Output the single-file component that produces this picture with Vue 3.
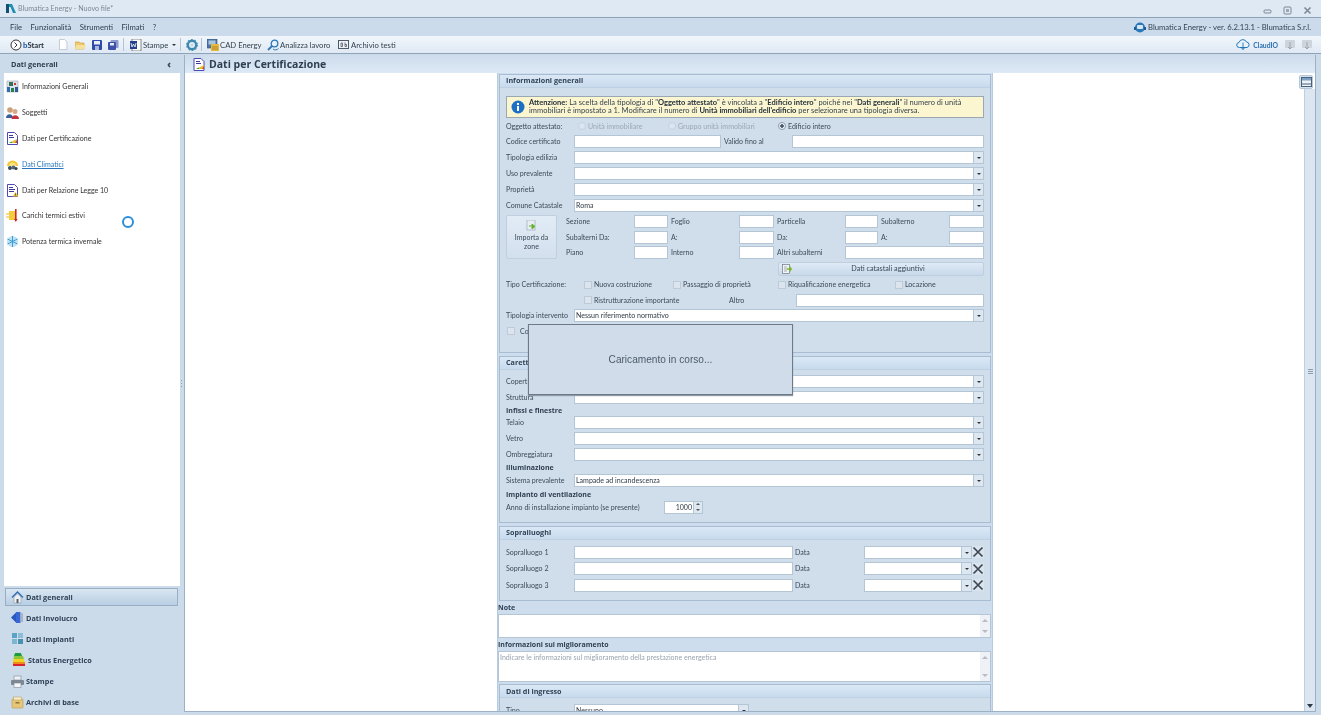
<script setup>
const tree = [
  { t: 'Informazioni Generali', i: 'info' },
  { t: 'Soggetti', i: 'people' },
  { t: 'Dati per Certificazione', i: 'cert' },
  { t: 'Dati Climatici', i: 'sun', link: true },
  { t: 'Dati per Relazione Legge 10', i: 'doc' },
  { t: 'Carichi termici estivi', i: 'heat' },
  { t: 'Potenza termica invernale', i: 'snow' }
]
const nav = [
  { t: 'Dati generali', i: 'house', on: true },
  { t: 'Dati Involucro', i: 'wrap' },
  { t: 'Dati Impianti', i: 'plant' },
  { t: 'Status Energetico', i: 'status', wide: true },
  { t: 'Stampe', i: 'print' },
  { t: 'Archivi di base', i: 'box' }
]
const catasto = [
  ['Sezione', 'Foglio', 'Particella', 'Subalterno'],
  ['Subalterni Da:', 'A:', 'Da:', 'A:']
]
const combos1 = [
  { l: 'Tipologia edilizia', v: '' },
  { l: 'Uso prevalente', v: '' },
  { l: 'Proprietà', v: '' },
  { l: 'Comune Catastale', v: 'Roma' }
]
const combos3 = ['Telaio', 'Vetro', 'Ombreggiatura']
const visits = ['Sopralluogo 1', 'Sopralluogo 2', 'Sopralluogo 3']
</script>

<template>
  <div class="app">
    <header class="titlebar">
      <svg class="logo" width="11" height="11" viewBox="0 0 11 11"><path d="M0 1h6l4 9H7L4.500 4H3v6H0z" fill="#1f8fb0"/><path d="M0 1h3v9H0z" fill="#12506e"/></svg>
      <span class="title-text">Blumatica Energy - Nuovo file*</span>
      <div class="win-btns">
        <svg width="9" height="9" viewBox="0 0 9 9"><rect x="1" y="4" width="7" height="3" rx="1" fill="none" stroke="#7b8896"/></svg>
        <svg width="9" height="9" viewBox="0 0 9 9"><rect x="1" y="1" width="7" height="7" rx="1" fill="none" stroke="#7b8896"/><rect x="3" y="3" width="3" height="3" fill="#9aa6b2"/></svg>
        <svg width="9" height="9" viewBox="0 0 9 9"><path d="M1.500 1.500l6 6M7.500 1.500l-6 6" stroke="#7b8896" stroke-width="1.600"/></svg>
      </div>
    </header>

    <div class="menubar">
      <span>File</span><span>Funzionalità</span><span>Strumenti</span><span>Filmati</span><span>?</span>
      <div class="version">
        <svg width="12" height="11" viewBox="0 0 12 11"><circle cx="6" cy="5.500" r="5" fill="#2b78b8"/><rect x="3" y="3" width="6" height="4" rx="1" fill="#d8e6f2"/><rect x="0" y="5" width="2" height="3" fill="#1b5c94"/><rect x="10" y="5" width="2" height="3" fill="#1b5c94"/></svg>
        <span>Blumatica Energy - ver. 6.2.13.1 - Blumatica S.r.l.</span>
      </div>
    </div>

    <div class="toolbar">
      <svg class="t-ic" width="12" height="12" viewBox="0 0 12 12"><circle cx="6" cy="6" r="5" fill="#fff" stroke="#333"/><path d="M4.500 3.500L7 6l-2.500 2.500" fill="none" stroke="#333"/></svg>
      <span class="bstart"><b class="blue">b</b>Start</span>
      <svg class="t-new" width="9" height="11" viewBox="0 0 9 11"><path d="M.5.500h5l2.500 2.500v7.500H.5z" fill="#fff" stroke="#c4ccd6"/></svg>
      <svg class="t-open" width="11" height="10" viewBox="0 0 11 10"><path d="M0 2h4l1 1h4v6H0z" fill="#efc96a" stroke="#c79a35" stroke-width=".6"/><path d="M1 5h10l-2 4H0z" fill="#f7e09a"/></svg>
      <svg class="t-n" width="10" height="10" viewBox="0 0 10 10"><rect width="10" height="10" rx="1" fill="#2f4aa8"/><rect x="2" y="1" width="6" height="3.500" fill="#e8ecf5"/><rect x="3" y="6" width="4" height="4" fill="#aeb8d8"/></svg>
      <svg class="t-n" width="11" height="10" viewBox="0 0 11 10"><rect x="2.500" width="8" height="8" rx="1" fill="#8d98cc"/><rect x="0" y="2" width="8" height="8" rx="1" fill="#3e4fa8"/><rect x="2" y="3" width="4" height="2.500" fill="#e8ecf5"/></svg>
      <i class="sep s1"></i>
      <svg width="12" height="12" viewBox="0 0 12 12"><rect x="2" y="0" width="9" height="12" fill="#fff" stroke="#555" stroke-width=".7"/><rect x="0" y="2" width="7" height="8" fill="#26408f"/><path d="M1 4l1 4 1.500-3L5 8l1-4" stroke="#fff" fill="none" stroke-width=".8"/></svg>
      <span class="t-label stampe">Stampe</span>
      <i class="caret-small"></i>
      <i class="sep s2"></i>
      <svg width="12" height="12" viewBox="0 0 12 12"><circle cx="6" cy="6" r="4.200" fill="none" stroke="#3e88ad" stroke-width="2.400"/><circle cx="6" cy="6" r="5.400" fill="none" stroke="#4f93b8" stroke-width="1.200" stroke-dasharray="1.700 1.700"/><circle cx="6" cy="6" r="1.600" fill="#bcd8e8"/></svg>
      <i class="sep s3"></i>
      <svg width="12" height="12" viewBox="0 0 12 12"><rect width="10" height="9" fill="#4e78a8" stroke="#2f4f78" stroke-width=".6"/><rect x="1.500" y="1.500" width="7" height="4" fill="#a9c6e0"/><rect x="4" y="5" width="8" height="7" fill="#e8b93e"/><path d="M5 8h6M5 10h6" stroke="#8b6a14" stroke-width=".6"/></svg>
      <span class="t-label l-cad">CAD Energy</span>
      <svg class="an" width="12" height="12" viewBox="0 0 12 12"><circle cx="7.500" cy="4.500" r="3.300" fill="#e8f2fa" stroke="#2f77b5" stroke-width="1.300"/><path d="M5 7L1 11" stroke="#2f77b5" stroke-width="1.800"/><path d="M6 10c2 1.500 4 1 5.500-.5" stroke="#2f77b5" fill="none"/></svg>
      <span class="t-label l-an">Analizza lavoro</span>
      <svg class="an" width="11" height="9" viewBox="0 0 11 9"><rect x=".5" y=".5" width="10" height="8" fill="#eef2f7" stroke="#4d5a68"/><path d="M3 6.500V3M3 3h1.500v3.500H3M7 2.500v4h1.500V4.500H7" stroke="#3c4854" stroke-width=".7" fill="none"/></svg>
      <span class="t-label l-ar">Archivio testi</span>
      <div class="cloud">
        <svg width="14" height="11" viewBox="0 0 14 11"><path d="M3.500 8.500a2.500 2.500 0 0 1-.5-5 4 4 0 0 1 7.500-.5 2.800 2.800 0 0 1 .5 5.500H3.500z" fill="#eaf3fa" stroke="#2277b8"/><path d="M7 3.500v7M5 8.500l2 2 2-2" stroke="#2277b8" fill="none" stroke-width=".9"/></svg>
        <span class="cloud-text">ClaudIO</span>
        <svg class="sync" width="10" height="11" viewBox="0 0 10 11"><rect y="1" width="10" height="8" rx="1" fill="#cdd4db"/><path d="M5 3v7M3 8l2 2 2-2" stroke="#9aa5b0" fill="none"/></svg>
        <svg class="sync" width="10" height="11" viewBox="0 0 10 11"><rect y="1" width="10" height="8" rx="1" fill="#cdd4db"/><path d="M5 3v7M3 8l2 2 2-2" stroke="#9aa5b0" fill="none"/></svg>
      </div>
    </div>

    <div class="main">
      <aside class="side">
        <div class="side-head"><span>Dati generali</span><b class="chev">‹</b></div>
        <ul class="tree">
          <li v-for="n in tree" :key="n.t">
            <svg width="13" height="13" viewBox="0 0 13 13">
              <g v-if="n.i === 'info'"><rect x="1" y="1" width="11" height="11" fill="#dbe3ea" stroke="#8896a4" stroke-width=".5"/><rect x="3" y="2" width="4" height="4" fill="#3b6f52"/><rect x="1" y="7" width="3" height="5" fill="#2f6fb0"/><rect x="5" y="8" width="3" height="4" fill="#2b7d4a"/><rect x="9" y="7" width="3" height="5" fill="#2e5b95"/><rect x="8" y="3" width="2" height="2" fill="#c43a3a"/></g>
              <g v-else-if="n.i === 'people'"><circle cx="4" cy="4" r="2.800" fill="#caa078"/><path d="M0 12c0-5 7-5 7 0z" fill="#3a5d9c"/><circle cx="9" cy="5.500" r="2.500" fill="#d8a98a"/><path d="M5.500 13c0-5 7.500-5 7.500 0z" fill="#c43340"/></g>
              <g v-else-if="n.i === 'cert'"><path d="M1.500.500h7l3 3v9h-10z" fill="#fff" stroke="#4f49b5"/><path d="M3 3.500h4M3 5.500h5" stroke="#3d39a0"/><path d="M3 11h8V7z" fill="#e3c03a"/><path d="M3 11h3V9.500z" fill="#2ca24c"/><path d="M9 11h2V8z" fill="#d8382e"/></g>
              <g v-else-if="n.i === 'sun'"><path d="M1 8a5.500 5.500 0 0 1 11 0z" fill="#f5c631"/><path d="M3 8a3.500 3.500 0 0 1 7 0z" fill="#f9e48a"/><circle cx="4" cy="10" r="2" fill="#3a4a5c"/><circle cx="7.500" cy="9.500" r="2" fill="#55677a"/><circle cx="10" cy="10.500" r="1.600" fill="#33414f"/></g>
              <g v-else-if="n.i === 'doc'"><path d="M1.500.500h7l3 3v9h-10z" fill="#fff" stroke="#4f49b5"/><path d="M3 3.500h4M3 5.500h6M3 7.500h5" stroke="#3d39a0"/><path d="M9.500 8l3 4.500h-6z" fill="#f0c62d"/><path d="M9.500 9.500v2" stroke="#333" stroke-width=".7"/></g>
              <g v-else-if="n.i === 'heat'"><rect x="3" y="2" width="6" height="9" fill="#f4cc3d"/><path d="M0 5h3M0 8h3" stroke="#e4b92f"/><rect x="9" y="0" width="1.600" height="10" fill="#c92a2a"/><path d="M8 10l1.800 3 1.800-3z" fill="#c92a2a"/></g>
              <g v-else-if="n.i === 'snow'"><circle cx="6.500" cy="6.500" r="5.500" fill="#bfe1f4"/><path d="M6.500 1v11M1.500 4l10 5M11.500 4l-10 5" stroke="#3b9bd6"/></g>
            </svg>
            <span :class="{ link: n.link }">{{ n.t }}</span>
          </li>
          <li class="spin-host"><i class="spinner"></i></li>
        </ul>
        <nav class="nav">
          <div v-for="n in nav" :key="n.t" class="nav-item" :class="{ on: n.on, wide: n.wide }">
            <svg width="13" height="13" viewBox="0 0 13 13">
              <g v-if="n.i === 'house'"><path d="M1 6.500L6.500 1 12 6.500" fill="none" stroke="#2f6db0" stroke-width="1.300"/><path d="M3 6l3.500-3L10 6v6H3z" fill="#eef1f4" stroke="#7d8a96" stroke-width=".5"/><rect x="5.500" y="8" width="2" height="4" fill="#56616c"/></g>
              <g v-else-if="n.i === 'wrap'"><path d="M0 6.500L5 1.500v10z" fill="#2a57c0"/><rect x="5" y="1" width="4.500" height="11" fill="#3868d6"/><rect x="9.500" y="2" width="2.500" height="9" fill="#a8b4c4"/></g>
              <g v-else-if="n.i === 'plant'"><rect x="1" y="1" width="5" height="5" fill="#5aa3c6"/><rect x="7" y="1" width="5" height="5" fill="#8bbdd4"/><rect x="1" y="7" width="5" height="5" fill="#7cb7d2"/><rect x="7" y="7" width="5" height="5" fill="#4a90b0"/><path d="M6.500 0v13M0 6.500h13" stroke="#d0dcea" stroke-width=".8"/></g>
              <g v-else-if="n.i === 'status'"><path d="M3 0h6l1 3H2z" fill="#1d9e3a"/><path d="M2 3h9l1 3H1.500z" fill="#8cc63f"/><path d="M1.500 6h10l1 3H1z" fill="#f2d21e"/><path d="M1 9h12v2H1z" fill="#ef8a1d"/><path d="M1 11h12v2H1z" fill="#d8242c"/></g>
              <g v-else-if="n.i === 'print'"><rect x="3" y="1" width="7" height="4" fill="#eef1f5" stroke="#7b8793" stroke-width=".6"/><rect x="0" y="5" width="13" height="5" rx="1" fill="#7d8894"/><rect x="3" y="8" width="7" height="4.500" fill="#f5f6f8" stroke="#7b8793" stroke-width=".6"/></g>
              <g v-else><rect x="1" y="3" width="11" height="9" rx="1" fill="#e6c679" stroke="#b59445" stroke-width=".6"/><rect x="2.500" y="1" width="8" height="3" fill="#f6eccb" stroke="#b59445" stroke-width=".5"/><rect x="4.500" y="6" width="4" height="1.500" fill="#8f7330"/></g>
            </svg>
            <span>{{ n.t }}</span>
          </div>
        </nav>
      </aside>

      <div class="splitter"><i></i></div>

      <section class="content">
        <div class="content-head">
          <svg width="12" height="13" viewBox="0 0 12 13"><path d="M1 .500h7l3 3v9H1z" fill="#fff" stroke="#4f49b5"/><path d="M3 3.500h4M3 5.500h5" stroke="#3d39a0"/><path d="M3 11h8V7z" fill="#e3c03a"/><path d="M3 11h3V9.500z" fill="#2ca24c"/><path d="M9 11h2V8z" fill="#d8382e"/></svg>
          <h1>Dati per Certificazione</h1>
        </div>
        <div class="canvas">
          <div class="form">
            <div class="panel p1">
              <div class="p-head">Informazioni generali</div>
              <div class="p-body">
                <div class="alert">
                  <svg width="14" height="14" viewBox="0 0 14 14"><circle cx="7" cy="7" r="6.500" fill="#1c6fc4"/><rect x="6" y="6" width="2" height="5" fill="#fff"/><rect x="6" y="3" width="2" height="2" fill="#fff"/></svg>
                  <p><b>Attenzione:</b> La scelta della tipologia di "<b>Oggetto attestato</b>" è vincolata a "<b>Edificio intero</b>" poiché nei "<b>Dati generali</b>" il numero di unità<br>immobiliari è impostato a 1. Modificare il numero di <b>Unità immobiliari dell'edificio</b> per selezionare una tipologia diversa.</p>
                </div>
                <div class="row h15 first">
                  <label>Oggetto attestato:</label>
                  <span class="radio r1 off"><i></i>Unità immobiliare</span>
                  <span class="radio r2 off"><i></i>Gruppo unità immobiliari</span>
                  <span class="radio r3"><i class="dot"></i>Edificio intero</span>
                </div>
                <div class="row">
                  <label>Codice certificato</label>
                  <div class="inp w147"></div>
                  <span class="lbl-valid">Valido fino al</span>
                  <div class="inp grow"></div>
                </div>
                <div v-for="c in combos1" :key="c.l" class="row">
                  <label>{{ c.l }}</label>
                  <div class="combo"><span>{{ c.v }}</span><i class="arrow"></i></div>
                </div>
                <div class="catasto">
                  <button class="import" type="button">
                    <svg width="11" height="11" viewBox="0 0 11 11"><rect x="1" y="0" width="8" height="10" fill="#e7edf3" stroke="#8fa0b0" stroke-width=".6"/><path d="M3 6h5M6 4l3 2.500L6 9z" stroke="#65b32e" fill="#65b32e"/></svg>
                    <span>Importa da<br>zone</span>
                  </button>
                  <div class="cat-grid">
                    <div v-for="(r, i) in catasto" :key="i" class="cat-row">
                      <template v-for="(l, j) in r" :key="l + j">
                        <span>{{ l }}</span><div class="inp"></div>
                      </template>
                    </div>
                    <div class="cat-row">
                      <span>Piano</span><div class="inp"></div>
                      <span>Interno</span><div class="inp"></div>
                      <span>Altri subalterni</span><div class="inp span3"></div>
                    </div>
                  </div>
                </div>
                <button class="extra" type="button">
                  <svg width="11" height="10" viewBox="0 0 11 10"><rect x=".5" y=".5" width="7" height="9" fill="#f1f4f7" stroke="#6c7a88" stroke-width=".7"/><path d="M2 3h3M2 5h3M2 7h3" stroke="#6c7a88" stroke-width=".6"/><path d="M5 5h5M8 2.500v5" stroke="#7ab52e" stroke-width="1.600"/></svg>
                  <span>Dati catastali aggiuntivi</span>
                </button>
                <div class="row">
                  <label>Tipo Certificazione:</label>
                  <span class="check c1"><i></i>Nuova costruzione</span>
                  <span class="check c2"><i></i>Passaggio di proprietà</span>
                  <span class="check c3"><i></i>Riqualificazione energetica</span>
                  <span class="check c4"><i></i>Locazione</span>
                </div>
                <div class="row h15">
                  <label></label>
                  <span class="check c5"><i></i>Ristrutturazione importante</span>
                  <span class="altro">Altro</span>
                  <div class="inp grow"></div>
                </div>
                <div class="row">
                  <label>Tipologia intervento</label>
                  <div class="combo"><span>Nessun riferimento normativo</span><i class="arrow"></i></div>
                </div>
                <div class="row h15">
                  <span class="check c6"><i></i>Co</span>
                </div>
              </div>
            </div>

            <div class="panel p2">
              <div class="p-head">Caretteristiche</div>
              <div class="p-body">
                <div class="row"><label>Copertura</label><div class="combo"><i class="arrow"></i></div></div>
                <div class="row"><label>Struttura</label><div class="combo"><i class="arrow"></i></div></div>
                <div class="row h10"><strong>Infissi e finestre</strong></div>
                <div v-for="(c, i) in combos3" :key="c" class="row" :class="{ h15: i === 0 }"><label>{{ c }}</label><div class="combo"><i class="arrow"></i></div></div>
                <div class="row h10"><strong>Illuminazione</strong></div>
                <div class="row"><label>Sistema prevalente</label><div class="combo"><span>Lampade ad incandescenza</span><i class="arrow"></i></div></div>
                <div class="row h12"><strong>Impianto di ventilazione</strong></div>
                <div class="row h14">
                  <label class="auto">Anno di installazione impianto (se presente)</label>
                  <div class="spin"><span>1000</span><i class="sp-btn"><b></b><b></b></i></div>
                </div>
              </div>
            </div>

            <div class="panel p3">
              <div class="p-head">Sopralluoghi</div>
              <div class="p-body">
                <div v-for="v in visits" :key="v" class="row">
                  <label>{{ v }}</label>
                  <div class="inp w220"></div>
                  <span class="data">Data</span>
                  <div class="combo date"><i class="arrow"></i></div>
                  <svg class="clear" width="12" height="12" viewBox="0 0 12 12"><path d="M1.500 1.500l9 9M10.500 1.500l-9 9" stroke="#3d4752" stroke-width="1.700"/></svg>
                </div>
              </div>
            </div>

            <div class="cap">Note</div>
            <div class="area a-note"><span></span><i class="mini-sb"><b class="up"></b><b class="down"></b></i></div>
            <div class="cap">Informazioni sul miglioramento</div>
            <div class="area a-info"><span>Indicare le informazioni sul miglioramento della prestazione energetica</span><i class="mini-sb"><b class="up"></b><b class="down"></b></i></div>

            <div class="panel p4">
              <div class="p-head">Dati di ingresso</div>
              <div class="p-body">
                <div class="row"><label>Tipo</label><div class="combo short"><span>Nessuno</span><i class="arrow"></i></div></div>
              </div>
            </div>

            <div class="loading">Caricamento in corso...</div>
          </div>

          <button class="side-btn" type="button">
            <svg width="11" height="10" viewBox="0 0 11 10"><rect x=".5" y=".5" width="10" height="9" fill="#eef3f8" stroke="#48637e"/><rect x="1" y="1" width="9" height="2.500" fill="#7ea1c2"/><path d="M1 7h9" stroke="#48637e"/></svg>
          </button>
          <div class="vscroll"><b class="up"></b><i class="grip"></i><b class="down"></b></div>
        </div>
      </section>
    </div>
  </div>
</template>

<style>
html, body { margin: 0; background: #d6e3f0; }
</style>

<style scoped>
.app { width: 1321px; height: 715px; overflow: hidden; display: flex; flex-direction: column; background: #d6e3f0; font: 7.050px "Lato", sans-serif; color: #3c4a58; filter: blur(.4px); }
* { box-sizing: border-box; }
.titlebar { height: 17px; display: flex; align-items: center; padding-left: 6px; background: #dfe9f4; flex: none; }
.title-text { margin-left: 1px; color: #7c8794; font-size: 7.100px; }
.win-btns { margin-left: auto; display: flex; gap: 11px; padding-right: 9px; margin-top: 4px; }
.menubar { height: 19px; flex: none; display: flex; align-items: center; gap: 8.500px; padding: 0 8px 0 10px; background: #ccdbeb; border-top: 1px solid #8ea3b8; color: #2e3d4c; font-size: 7.700px; }
.version { margin-left: auto; display: flex; align-items: center; gap: 2px; font-size: 7.700px; color: #34434f; padding-right: 2px; }
.toolbar { height: 18px; flex: none; display: flex; align-items: center; padding-left: 10px; background: linear-gradient(#f1f6fb, #dfe9f4); border-bottom: 1px solid #8ea3b8; color: #34434f; font-size: 7.700px; }
.bstart { font-weight: 700; margin-left: 1px; width: 24px; color: #28343f; }
.blue { color: #1e5da8; }
.t-new { margin-left: 12px; }
.t-open { margin-left: 7px; }
.t-n { margin-left: 6px; }
.sep { width: 1px; height: 13px; background: #b4c3d2; }
.s1 { margin: 0 6px 0 4px; }
.s2 { margin: 0 5px 0 4px; }
.s3 { margin: 0 5px 0 3px; }
.t-label { margin-left: 1px; white-space: nowrap; }
.stampe { width: 27px; }
.l-cad { width: 41px; }
.l-an { width: 52px; }
.l-ar { margin-left: 2px; }
.caret-small { width: 0; height: 0; border: 2px solid transparent; border-top: 2.500px solid #333; border-bottom: 0; margin-left: 2px; }
.an { margin-left: 6px; }
.cloud { margin-left: auto; display: flex; align-items: center; padding-right: 9px; }
.cloud-text { color: #2a6fb0; font-weight: 700; font-size: 6.800px; margin-left: 3px; }
.sync { margin-left: 7px; }

.main { flex: 1; min-height: 0; display: flex; padding: 1px 5px 3px 4px; background: #ccdbea; }
.side { width: 176px; flex: none; display: flex; flex-direction: column; }
.side-head { height: 18px; flex: none; display: flex; align-items: center; justify-content: space-between; padding: 0 9px 0 7px; font: bold 7.300px "Open Sans", sans-serif; color: #2f3e4d; }
.chev { font-size: 10px; line-height: 1; color: #3c4a58; }
.tree { list-style: none; margin: 0; padding: 1px 0 0 0; height: 513px; background: #fff; flex: none; position: relative; }
.tree li { height: 25.800px; display: flex; align-items: center; gap: 3px; padding-left: 2px; color: #333; font-size: 7.050px; white-space: nowrap; }
.tree .link { color: #2877bd; text-decoration: underline; }
.tree .spin-host { position: absolute; left: 118px; top: 143px; padding: 0; height: auto; }
.spinner { display: block; width: 12px; height: 12px; border: 2px solid #2a8fdc; border-radius: 50%; background: #fff; }
.nav { flex: 1; padding-top: 2px; }
.nav-item { height: 21.200px; display: flex; align-items: center; gap: 2px; padding-left: 7px; font: bold 7.300px "Open Sans", sans-serif; color: #2f4257; }
.nav-item.on { height: 18px; margin: 0 2px 1px 1px; background: linear-gradient(#d9e6f2, #b8cee3); border: 1px solid #97aec5; padding-left: 5px; }
.nav-item.wide { gap: 3px; padding-left: 8px; }

.splitter { width: 4px; flex: none; position: relative; }
.splitter i { position: absolute; left: 1px; top: 325px; width: 1px; height: 9px; background: repeating-linear-gradient(#8a9cae 0 1px, transparent 1px 3px); }
.content { flex: 1; min-width: 0; display: flex; flex-direction: column; border: 1px solid #9db1c6; border-width: 0 1px 1px 1px; }
.content-head { height: 18px; flex: none; display: flex; align-items: center; gap: 4px; padding-left: 8px; background: linear-gradient(#cddcec, #dde9f5); }
h1 { margin: 0; font: bold 10.500px "Open Sans", sans-serif; color: #2f3f50; white-space: nowrap; }
.canvas { flex: 1; min-height: 0; position: relative; background: #fff; display: flex; justify-content: flex-start; overflow: hidden; }

.form { width: 496px; margin-left: 312px; padding: 0 1px; background: #cedded; position: relative; border: 1px solid #b8cade; border-width: 0 1px; height: 800px; }
.panel { border: 1px solid #a8bdd2; background: #d0deec; }
.p1 { height: 279px; margin-top: 1px; }
.p2 { height: 167px; margin-top: 3px; }
.p3 { height: 75px; margin-top: 3px; }
.p4 { margin-top: 2px; }
.p-head { height: 13px; padding: 0 0 2px 6px; display: flex; align-items: center; font: bold 7.200px "Open Sans", sans-serif; color: #2f4255; background: linear-gradient(#dbe8f5, #c7dbee); border-bottom: 1px solid #bfd0e2; }
.p4 .p-head { padding-bottom: 0; }
.p-body { padding: 8px 6px 0 6px; }
.p2 .p-body { padding-top: 3px; }
.p3 .p-body, .p4 .p-body { padding-top: 4px; }
.alert { height: 22px; display: flex; align-items: center; gap: 4px; padding: 0 2px 0 4px; background: #fbf6cf; border: 1px solid #9aa8b4; white-space: nowrap; }
.alert svg { flex: none; }
.alert p { margin: 0; font-size: 7.500px; line-height: 8.500px; color: #37434f; }
.alert b { font-weight: 700; color: #26313c; }
.row { height: 16px; display: flex; align-items: center; white-space: nowrap; }
.row.first { padding-top: 1px; }
.h15 { height: 15px; }
.h10 { height: 10px; }
.h12 { height: 12px; }
.h14 { height: 14px; }
.row label { width: 68px; flex: none; color: #3c4a58; }
.row label.auto { width: 158px; }
.row strong { font: bold 7px "Open Sans", sans-serif; color: #2f3f4f; }
.inp { height: 13px; background: #fff; border: 1px solid #b4c5d6; }
.w147 { width: 147px; flex: none; }
.w220 { width: 219px; flex: none; }
.grow { flex: 1; }
.lbl-valid { width: 71px; padding-left: 3px; flex: none; }
.combo { flex: 1; height: 13px; background: #fff; border: 1px solid #b4c5d6; display: flex; align-items: center; padding-left: 1px; color: #2e3a46; position: relative; }
.combo span { padding-left: 0; }
.arrow { position: absolute; right: 0; top: 0; bottom: 0; width: 10px; background: #dde7f1; border-left: 1px solid #b4c5d6; }
.arrow::after { content: ""; position: absolute; left: 3px; top: 5px; border: 2px solid transparent; border-top: 2px solid #333; border-bottom: 0; }
.radio, .check { display: inline-flex; align-items: center; gap: 2px; flex: none; color: #3c4a58; }
.radio.off { color: #9aa7b4; }
.radio i { width: 8px; height: 8px; border-radius: 50%; background: #dbe5ef; border: 1px solid #c4d1de; display: block; }
.radio .dot { background: radial-gradient(circle, #4a5a6a 0 1.500px, #eef3f8 2px); border-color: #8d9cab; }
.r1 { width: 90px; margin-left: 4px; }
.r2 { width: 110px; }
.check i { width: 8px; height: 8px; background: #dce5ee; border: 1px solid #bdcbd9; display: block; }
.c1 { width: 89px; margin-left: 10px; }
.c2 { width: 105px; }
.c3 { width: 117px; }
.c5 { width: 145px; margin-left: 10px; }
.c6 { margin-left: 1px; gap: 5px; }
.altro { width: 67px; }
.catasto { display: flex; margin-top: 1px; }
.import { width: 51px; height: 44px; margin-top: 1px; flex: none; padding: 4px 0 0; background: linear-gradient(#e2ecf6, #d2dfed); border: 1px solid #bfcfdf; border-radius: 2px; display: flex; flex-direction: column; align-items: center; gap: 2px; font: 7.050px/9px "Lato", sans-serif; color: #3c4a58; }
.cat-grid { flex: 1; margin-left: 9px; }
.cat-row { height: 15.500px; display: grid; grid-template-columns: 68px 34px 71px 35px 71px 33px 71px 35px; align-items: center; }
.cat-row > span:nth-of-type(2), .cat-row > span:nth-of-type(3), .cat-row > span:nth-of-type(4) { padding-left: 3px; }
.span3 { grid-column: span 3; }
.extra { display: flex; align-items: center; width: 206px; height: 14px; margin: 1px 0 1px auto; padding: 0 0 0 3px; background: linear-gradient(#dfeaf5, #c8d9ea); border: 1px solid #bfcfdf; border-radius: 2px; font: 7.200px "Lato", sans-serif; color: #3c4a58; }
.extra span { flex: 1; text-align: center; }
.spin { width: 39px; height: 13px; background: #fff; border: 1px solid #b4c5d6; position: relative; text-align: right; padding-right: 10px; line-height: 11px; color: #2e3a46; }
.sp-btn { position: absolute; right: 0; top: 0; bottom: 0; width: 9px; background: #dde7f1; border-left: 1px solid #b4c5d6; }
.sp-btn b { position: absolute; left: 2px; border: 2px solid transparent; }
.sp-btn b:first-child { top: 1px; border-bottom: 2px solid #555; border-top: 0; }
.sp-btn b:last-child { bottom: 2px; border-top: 2px solid #555; border-bottom: 0; }
.data { width: 71px; padding-left: 2px; flex: none; }
.date { flex: none; width: 108px; }
.clear { flex: none; background: #d9e4ef; }
.p3 .row { height: 16.500px; }
.cap { height: 13px; margin-left: -1px; font: bold 7px/14px "Open Sans", sans-serif; color: #2f4255; white-space: nowrap; }
.area { background: #fff; border: 1px solid #b4c5d6; position: relative; margin-left: -1px; padding: 1px; color: #9aa4af; font-size: 7.050px; }
.a-note { height: 24px; }
.a-info { height: 31px; }
.mini-sb { position: absolute; right: 0; top: 0; bottom: 0; width: 10px; background: #eef2f6; }
.mini-sb b, .vscroll b { position: absolute; left: 2px; border: 3px solid transparent; }
.mini-sb .up { top: 4px; border-bottom: 3px solid #b4bcc5; border-top: 0; }
.mini-sb .down { bottom: 4px; border-top: 3px solid #b4bcc5; border-bottom: 0; }
.short { flex: none; width: 175px; }
.loading { position: absolute; left: 30px; top: 251px; width: 265px; height: 71px; background: #d0dcea; border: 1px solid #6e7a87; box-shadow: 0 1px 1px #8d99a5; display: flex; align-items: center; justify-content: center; padding-bottom: 1px; font: 10.100px "Liberation Sans", sans-serif; color: #4b5a6a; }

.side-btn { position: absolute; left: 1114px; top: 2px; width: 14px; height: 14px; padding: 0; display: flex; align-items: center; justify-content: center; background: #d4e1ee; border: 1px solid #b5c7d9; border-radius: 2px; z-index: 1; }
.vscroll { position: absolute; right: 0; top: 16px; bottom: 0; width: 11px; background: #dbe6f1; border-left: 1px solid #c0cfde; }
.vscroll .up { display: none; }
.vscroll .down { bottom: 3px; border-top: 4px solid #2c3a48; border-bottom: 0; }
.grip { position: absolute; left: 3px; top: 280px; width: 5px; height: 6px; background: repeating-linear-gradient(#8a9cae 0 1px, transparent 1px 2px); }
</style>
